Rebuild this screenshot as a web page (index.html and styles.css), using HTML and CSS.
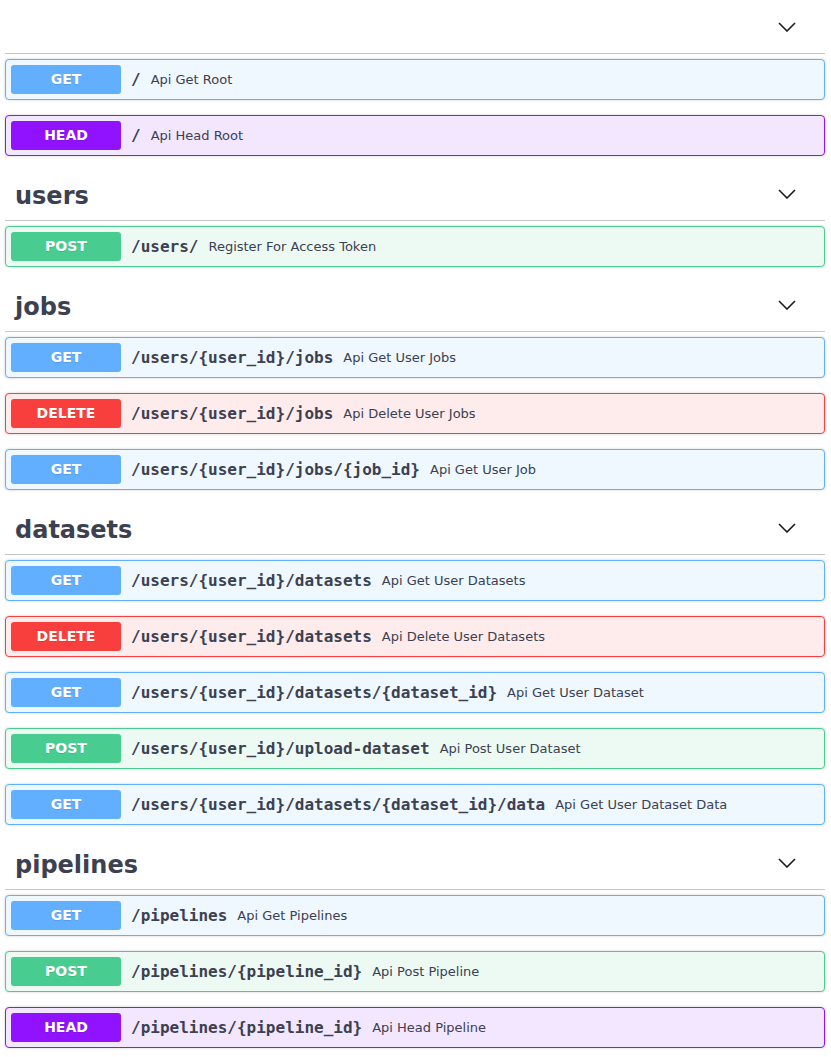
FILE: index.html
```html
<!DOCTYPE html>
<html>
<head>
<meta charset="utf-8">
<link rel="stylesheet" href="styles.css">
</head>
<body>
<div class="wrapper">
  <section class="tag-section">
    <div class="tag">
      <h3 class="tag-title"></h3>
      <svg class="arrow" width="18" height="10" viewBox="0 0 18 10"><polyline points="1,1 9,9 17,1"/></svg>
    </div>
    <div class="opblock get"><span class="method">GET</span><span class="path">/</span><span class="desc">Api Get Root</span></div>
    <div class="opblock head"><span class="method">HEAD</span><span class="path">/</span><span class="desc">Api Head Root</span></div>
  </section>

  <section class="tag-section">
    <div class="tag">
      <h3 class="tag-title">users</h3>
      <svg class="arrow" width="18" height="10" viewBox="0 0 18 10"><polyline points="1,1 9,9 17,1"/></svg>
    </div>
    <div class="opblock post"><span class="method">POST</span><span class="path">/users/</span><span class="desc">Register For Access Token</span></div>
  </section>

  <section class="tag-section">
    <div class="tag">
      <h3 class="tag-title">jobs</h3>
      <svg class="arrow" width="18" height="10" viewBox="0 0 18 10"><polyline points="1,1 9,9 17,1"/></svg>
    </div>
    <div class="opblock get"><span class="method">GET</span><span class="path">/users/{user_id}/jobs</span><span class="desc">Api Get User Jobs</span></div>
    <div class="opblock delete"><span class="method">DELETE</span><span class="path">/users/{user_id}/jobs</span><span class="desc">Api Delete User Jobs</span></div>
    <div class="opblock get"><span class="method">GET</span><span class="path">/users/{user_id}/jobs/{job_id}</span><span class="desc">Api Get User Job</span></div>
  </section>

  <section class="tag-section">
    <div class="tag">
      <h3 class="tag-title">datasets</h3>
      <svg class="arrow" width="18" height="10" viewBox="0 0 18 10"><polyline points="1,1 9,9 17,1"/></svg>
    </div>
    <div class="opblock get"><span class="method">GET</span><span class="path">/users/{user_id}/datasets</span><span class="desc">Api Get User Datasets</span></div>
    <div class="opblock delete"><span class="method">DELETE</span><span class="path">/users/{user_id}/datasets</span><span class="desc">Api Delete User Datasets</span></div>
    <div class="opblock get"><span class="method">GET</span><span class="path">/users/{user_id}/datasets/{dataset_id}</span><span class="desc">Api Get User Dataset</span></div>
    <div class="opblock post"><span class="method">POST</span><span class="path">/users/{user_id}/upload-dataset</span><span class="desc">Api Post User Dataset</span></div>
    <div class="opblock get"><span class="method">GET</span><span class="path">/users/{user_id}/datasets/{dataset_id}/data</span><span class="desc">Api Get User Dataset Data</span></div>
  </section>

  <section class="tag-section">
    <div class="tag">
      <h3 class="tag-title">pipelines</h3>
      <svg class="arrow" width="18" height="10" viewBox="0 0 18 10"><polyline points="1,1 9,9 17,1"/></svg>
    </div>
    <div class="opblock get"><span class="method">GET</span><span class="path">/pipelines</span><span class="desc">Api Get Pipelines</span></div>
    <div class="opblock post"><span class="method">POST</span><span class="path">/pipelines/{pipeline_id}</span><span class="desc">Api Post Pipeline</span></div>
    <div class="opblock head"><span class="method">HEAD</span><span class="path">/pipelines/{pipeline_id}</span><span class="desc">Api Head Pipeline</span></div>
  </section>
</div>
</body>
</html>
```

FILE: styles.css
```css
html, body {
  margin: 0;
  padding: 0;
  background: #fff;
}

body {
  font-family: "DejaVu Sans", sans-serif;
  color: #3b4151;
}

.wrapper {
  padding: 4px 6px 0 5px;
}

.tag {
  display: flex;
  align-items: center;
  justify-content: space-between;
  height: 49px;
  box-sizing: content-box;
  padding: 0 29px 0 10px;
  border-bottom: 1px solid rgba(59, 65, 81, 0.3);
  margin-bottom: 5px;
}

.tag-title {
  margin: 0;
  font-size: 24px;
  font-weight: bold;
  color: #3b4151;
  line-height: 30px;
}

.arrow {
  margin-bottom: 3px;
}

.arrow polyline {
  fill: none;
  stroke: #1b1b1b;
  stroke-width: 1.6;
}

.opblock {
  display: flex;
  align-items: center;
  padding: 5px;
  border: 1px solid;
  border-radius: 4px;
  margin-bottom: 15px;
  box-shadow: 0 0 3px rgba(0, 0, 0, 0.19);
}

.method {
  width: 110px;
  height: 29px;
  box-sizing: border-box;
  padding-bottom: 1px;
  flex-shrink: 0;
  display: flex;
  align-items: center;
  justify-content: center;
  border-radius: 3px;
  color: #fff;
  font-size: 14px;
  font-weight: bold;
  text-shadow: 0 1px 0 rgba(0, 0, 0, 0.1);
}

.path {
  font-family: "DejaVu Sans Mono", monospace;
  font-weight: bold;
  font-size: 16px;
  padding: 0 10px;
  color: #3b4151;
}

.desc {
  font-size: 13px;
  color: #3b4151;
}

.get { background: #eff7ff; border-color: #61affe; }
.get .method { background: #61affe; }

.post { background: #edfaf4; border-color: #49cc90; }
.post .method { background: #49cc90; }

.delete { background: #feebeb; border-color: #f93e3e; }
.delete .method { background: #f93e3e; }

.head { background: #f3e7ff; border-color: #9012fe; }
.head .method { background: #9012fe; }
```
